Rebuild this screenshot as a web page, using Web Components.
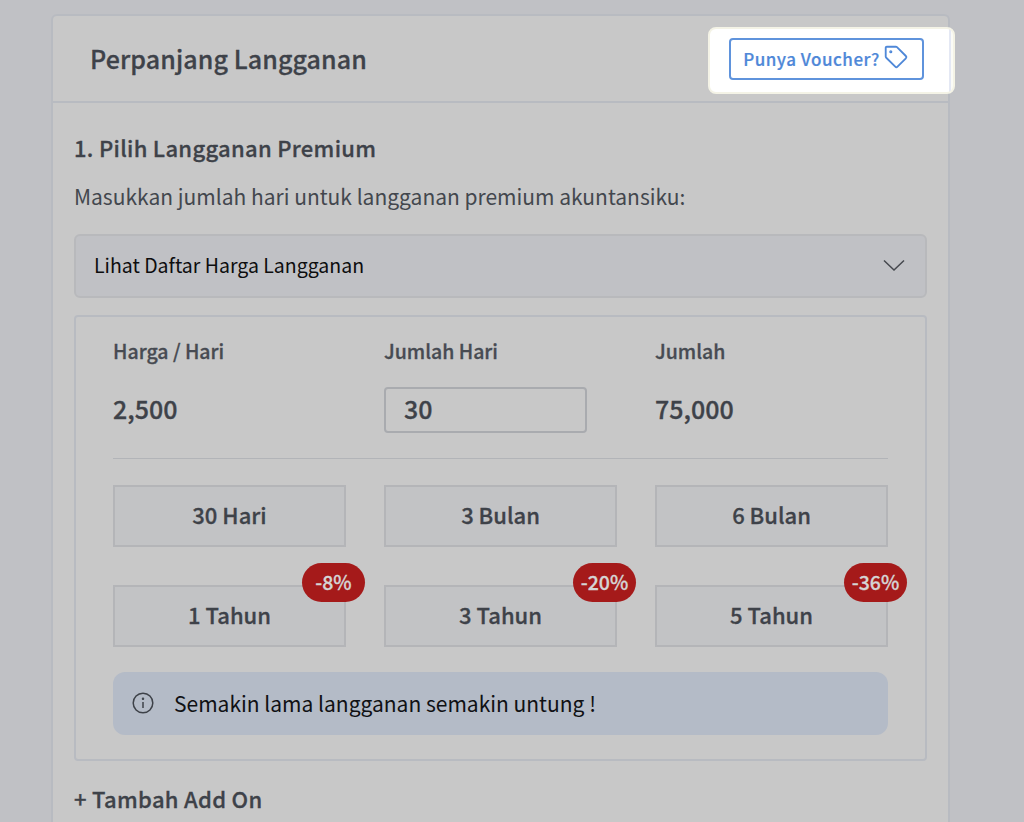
<!DOCTYPE html>
<html lang="en">
<head>
<meta charset="UTF-8">
<title>Perpanjang Langganan</title>
<style>
    html, body { margin: 0; height: 822px; overflow: hidden; background: #c0c1c5; }
    body { font-family: "Noto Sans CJK JP", "Noto Sans", sans-serif; color: #3e4249; }
</style>
</head>
<body>
<renew-card>
    <span slot="title">Perpanjang Langganan</span>
    <voucher-button slot="action">Punya Voucher?</voucher-button>
    <h-step>1. Pilih Langganan Premium</h-step>
    <p-note>Masukkan jumlah hari untuk langganan premium akuntansiku:</p-note>
    <price-accordion>Lihat Daftar Harga Langganan</price-accordion>
    <plan-panel>
        <plan-stats></plan-stats>
        <plan-grid>
            <plan-option>30 Hari</plan-option>
            <plan-option>3 Bulan</plan-option>
            <plan-option>6 Bulan</plan-option>
            <plan-option badge="-8%">1 Tahun</plan-option>
            <plan-option badge="-20%">3 Tahun</plan-option>
            <plan-option badge="-36%">5 Tahun</plan-option>
        </plan-grid>
        <info-alert>Semakin lama langganan semakin untung !</info-alert>
    </plan-panel>
    <h-step class="addon">+ Tambah Add On</h-step>
</renew-card>
<script>
    function define(name, html, setup) {
        customElements.define(name, class extends HTMLElement {
            constructor() {
                super();
                this.attachShadow({mode: 'open'});
                this.shadowRoot.innerHTML = html;
                if (setup) setup.call(this);
            }
        });
    }

    define('renew-card', `
        <style>
            :host { display: block; box-sizing: border-box; width: 899px; height: 808px; margin: 14px 0 0 51px;
                background: #c8c8c8; border: 2px solid #b8bbc1; border-bottom: 0; border-radius: 6px 6px 0 0; }
            header { box-sizing: border-box; height: 87px; padding: 0 24px 0 37px; display: flex; align-items: center;
                justify-content: space-between; border-bottom: 2px solid #b8bbc1; font-size: 25px; font-weight: 500;
                letter-spacing: .1px; line-height: 34px; }
            ::slotted(span) { display: block; padding-bottom: 2px; -webkit-text-stroke: .3px currentColor; }
            main { padding: 29px 21px 0; }
        </style>
        <header><slot name="title"></slot><slot name="action"></slot></header>
        <main><slot></slot></main>`);

    define('voucher-button', `
        <style>
            :host { display: block; position: relative; }
            .spot { position: absolute; left: -21px; top: -11px; width: 247px; height: 67px; box-sizing: border-box;
                background: linear-gradient(90deg, #fff 239px, #e4e8f4 239px, #e4e8f4 241px, #fbfbf6 241px);
                border: 2px solid #f4f3e6; border-radius: 8px; }
            .btn { position: relative; box-sizing: border-box; width: 195px; height: 42px; display: flex; align-items: center;
                justify-content: center; gap: 4px; padding-right: 2px; border: 2px solid #5f93dc; border-radius: 4px;
                color: #4f88d8; font-size: 17px; font-weight: 500; letter-spacing: .5px; line-height: 24px;
                -webkit-text-stroke: .2px currentColor; }
            svg { width: 26px; height: 26px; margin: -3px -1px 0 -1px; }
        </style>
        <div class="spot"></div>
        <div class="btn"><slot></slot>
            <svg viewBox="0 0 24 24" fill="none" stroke="currentColor" stroke-width="1.7" stroke-linejoin="round">
                <path d="M2.5 3.5a1 1 0 0 1 1-1h8.3a1.5 1.5 0 0 1 1.1.4l8.2 8.2a1.5 1.5 0 0 1 0 2.1l-7.7 7.7a1.5 1.5 0 0 1-2.1 0L3 12.7a1.5 1.5 0 0 1-.5-1.1z"/>
                <circle cx="7.2" cy="7.2" r=".6" fill="currentColor"/>
            </svg>
        </div>`);

    define('h-step', `
        <style>
            :host { display: block; font-size: 22px; font-weight: 500; line-height: 30px; letter-spacing: .3px;
                -webkit-text-stroke: .3px currentColor; }
            :host(.addon) { margin-top: 22px; }
        </style>
        <slot></slot>`);

    define('p-note', `
        <style>:host { display: block; margin-top: 19px; font-size: 21px; line-height: 30px; color: #43474e; }</style>
        <slot></slot>`);

    define('price-accordion', `
        <style>
            :host { display: flex; box-sizing: border-box; height: 64px; margin-top: 23px; padding: 0 20px 2px 18px;
                align-items: center; justify-content: space-between; background: #c0c1c5;
                border: 2px solid #b8b9bc; border-radius: 6px; color: #0d0d0e; font-size: 19.5px; line-height: 30px; }
            svg { width: 22px; height: 22px; display: block; }
        </style>
        <slot></slot>
        <svg viewBox="0 0 22 22" fill="none" stroke="#45484e" stroke-width="1.5"><path d="M1 6.5l10 9.5 10-9.5"/></svg>`);

    define('plan-panel', `
        <style>
            :host { display: block; box-sizing: border-box; height: 446px; margin-top: 17px; padding: 19px 37px 0;
                border: 2px solid #b8bbc1; border-radius: 4px; }
        </style>
        <slot></slot>`);

    define('plan-stats', `
        <style>
            :host { display: grid; grid-template-columns: repeat(3, 233px); column-gap: 38px; padding-bottom: 25px;
                border-bottom: 1px solid #b2b4b8; -webkit-text-stroke: .3px currentColor; }
            .lbl { font-size: 19.5px; font-weight: 500; line-height: 30px; color: #474b52; }
            .val { box-sizing: border-box; margin-top: 21px; height: 46px; padding-bottom: 4px; display: flex; align-items: center;
                font-size: 25px; font-weight: 500; line-height: 34px; }
            .val.field { padding-bottom: 0; }
            .box { box-sizing: border-box; width: 203px; height: 46px; padding: 0 0 4px 18px; display: flex; align-items: center;
                background: #c8c8c8; border: 2px solid #a9abaf; border-radius: 4px; }
        </style>
        <div><div class="lbl">Harga / Hari</div><div class="val">2,500</div></div>
        <div><div class="lbl">Jumlah Hari</div><div class="val field"><div class="box">30</div></div></div>
        <div><div class="lbl">Jumlah</div><div class="val">75,000</div></div>`);

    define('plan-grid', `
        <style>
            :host { display: grid; grid-template-columns: repeat(3, 233px); column-gap: 38px; row-gap: 38px; padding-top: 26px; }
        </style>
        <slot></slot>`);

    define('plan-option', `
        <style>
            :host { display: flex; position: relative; box-sizing: border-box; height: 62px; padding-bottom: 4px; align-items: center; justify-content: center;
                background: #c2c3c5; border: 2px solid #b4b5b8; font-size: 22px; font-weight: 500; line-height: 30px;
                -webkit-text-stroke: .3px currentColor; }
            .badge { position: absolute; right: -21px; top: -24px; width: 63px; height: 39px; box-sizing: border-box; padding-bottom: 1px; display: flex; align-items: center;
                justify-content: center; background: #a51a1a; border-radius: 20px; color: #d5d5d5; font-size: 19.5px; font-weight: 500; }
            .badge:empty { display: none; }
        </style>
        <slot></slot><div class="badge"></div>`,
        function () {
            this.shadowRoot.querySelector('.badge').textContent = this.getAttribute('badge') || '';
        });

    define('info-alert', `
        <style>
            :host { display: flex; box-sizing: border-box; height: 63px; margin-top: 25px; padding: 0 0 2px 19px; gap: 20px; align-items: center;
                background: #b4bbc7; border-radius: 12px; color: #101114; font-size: 21px; line-height: 30px;
                -webkit-text-stroke: 0; }
            svg { width: 22px; height: 22px; display: block; margin-top: 1px; }
        </style>
        <svg viewBox="0 0 22 22" fill="none" stroke="#3e4249" stroke-width="1.5">
            <circle cx="11" cy="11" r="9.8"/><path d="M11 10v6"/><circle cx="11" cy="6.8" r=".5" fill="#3e4249"/>
        </svg>
        <slot></slot>`);
</script>
</body>
</html>
